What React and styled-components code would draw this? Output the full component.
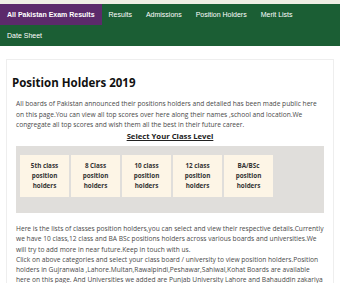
import React from "react";
import styled, { createGlobalStyle } from "styled-components";

const GlobalStyle = createGlobalStyle`
  html, body { margin: 0; padding: 0; background: #ffffff; }
  * { box-sizing: border-box; }
`;

const TopStrip = styled.div`
  height: 4px;
  background: #efeee4;
`;

const Nav = styled.nav`
  display: flex;
  flex-wrap: wrap;
  background: #1b5e34;
  font-family: "Liberation Sans", Arial, sans-serif;
  font-size: 7px;
`;

const NavItem = styled.a`
  display: flex;
  align-items: center;
  height: 21px;
  padding: 0 7px;
  color: #ffffff;
  text-decoration: none;
  white-space: nowrap;
  font-weight: ${(p) => (p.$active ? 700 : 400)};
  background: ${(p) => (p.$active ? "#5c2a6b" : "transparent")};
`;

const Main = styled.main`
  padding: 13px 6px 0;
  font-family: "Open Sans", sans-serif;
`;

const Card = styled.section`
  border: 1px solid #eeeeee;
  border-bottom: none;
  padding: 15px 5px 0;
  background: #fff;
`;

const Title = styled.h1`
  margin: 0;
  font-family: "Open Sans", sans-serif;
  font-size: 11.5px;
  line-height: 15px;
  font-weight: 700;
  color: #111;
`;

const Content = styled.div`
  margin: 9px 4px 0;
`;

const Para = styled.p`
  margin: ${(p) => p.$margin || "0"};
  font-size: 6.65px;
  line-height: ${(p) => p.$lh || "10.6px"};
  color: #4a4a4a;
`;

const SectionHeading = styled.h2`
  margin: 0;
  text-align: center;
  font-size: 7.7px;
  line-height: 11px;
  font-weight: 700;
  color: #222;
  text-decoration: underline;
`;

const ClassBox = styled.div`
  margin-top: 4.5px;
  background: #e0dedb;
  padding: 9px 4px 16px;
  display: flex;
  gap: 2px;
`;

const ClassButton = styled.a`
  width: 49px;
  height: 42px;
  background: #fdf5e6;
  display: flex;
  flex-direction: column;
  align-items: center;
  justify-content: center;
  font-size: 6.3px;
  line-height: 10px;
  font-weight: 700;
  color: #333;
  text-align: center;
  text-decoration: none;
`;

const navItems = ["Results", "Admissions", "Position Holders", "Merit Lists", "Date Sheet"];
const classes = ["5th class", "8 Class", "10 class", "12 class", "BA/BSc"];

export default function App() {
  return (
    <>
      <GlobalStyle />
      <TopStrip />
      <Nav>
        <NavItem $active>All Pakistan Exam Results</NavItem>
        {navItems.map((n) => (
          <NavItem key={n}>{n}</NavItem>
        ))}
      </Nav>
      <Main>
        <Card>
          <Title>Position Holders 2019</Title>
          <Content>
            <Para>
              All boards of Pakistan announced their positions holders and detailed has been made public here on this page.You can view all top scores over here along their names ,school and location.We congregate all top scores and wish them all the best in their future career.
            </Para>
            <SectionHeading>Select Your Class Level</SectionHeading>
            <ClassBox>
              {classes.map((c) => (
                <ClassButton key={c}>
                  <span>{c}</span>
                  <span>position</span>
                  <span>holders</span>
                </ClassButton>
              ))}
            </ClassBox>
            <Para $margin="10.7px 0 0" $lh="10.3px">
              Here is the lists of classes position holders,you can select and view their respective details.Currently we have 10 class,12 class and BA BSc positions holders across various boards and universities.We will try to add more in near future.Keep in touch with us.
              <br />
              Click on above categories and select your class board / university to view position holders.Position holders in Gujranwala ,Lahore.Multan,Rawalpindi,Peshawar,Sahiwal,Kohat Boards are available here on this page. And Universities we added are Punjab University Lahore and Bahauddin zakariya University Multan.
            </Para>
          </Content>
        </Card>
      </Main>
    </>
  );
}
